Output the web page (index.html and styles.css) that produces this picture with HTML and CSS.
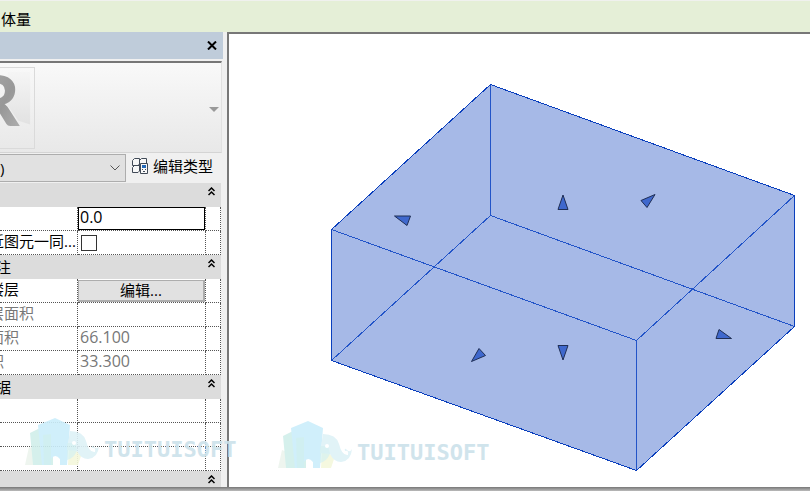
FILE: index.html
```
<!DOCTYPE html>
<html lang="zh-CN">
<head>
<meta charset="utf-8">
<title>体量</title>
<link rel="stylesheet" href="styles.css">
</head>
<body>
<header class="context-bar">体量</header>
<main class="workspace">
  <aside class="palette">
    <div class="palette-title"><button class="close" type="button" aria-label="关闭"><svg width="10" height="9" viewBox="0 0 10 9"><path d="M1 .5 9 8.500M9 .5 1 8.500" stroke="#000" stroke-width="2"/></svg></button></div>
    <div class="preview">
      <svg class="thumb" width="35" height="82" viewBox="0 0 35 82" aria-hidden="true">
        <defs><linearGradient id="metal" x1="0" y1="0" x2="1" y2="1"><stop offset="0" stop-color="#b0b0b0"/><stop offset=".6" stop-color="#989898"/><stop offset="1" stop-color="#b4b4b4"/></linearGradient>
        <linearGradient id="cast" x1="0" y1="0" x2="0" y2="1"><stop offset="0" stop-color="#f5f5f5"/><stop offset="1" stop-color="#e2e2e2"/></linearGradient></defs>
        <path d="M8 4H31V58L19 54 6 36Z" fill="url(#cast)"/>
        <text class="mark" x="20" y="60" text-anchor="end" fill="url(#metal)">R</text>
      </svg>
      <button class="drop" type="button" aria-label="类型选择器"><svg width="10" height="5" viewBox="0 0 10 5"><path d="M0 0H10L5 5Z" fill="#999"/></svg></button>
    </div>
    <div class="type-row">
      <div class="picker">
        <select aria-label="图元"><option>)</option></select>
        <svg width="10" height="6" viewBox="0 0 10 6"><path d="M.5 .5 5 5 9.500 .5" fill="none" stroke="#555"/></svg>
      </div>
      <button class="edit-type" type="button">
        <svg width="17" height="17" viewBox="0 0 17 17" fill="#f8f8f8" stroke="#414a57"><path d="M2.500 .5H7.500V6L6 7.500H.5V2.500ZM9.500 .5H14.500V6L13 7.500H7.500V2.500ZM2.500 7.500H7.500V13L6 14.500H.5V9.500Z"/><path d="M8.500 5.500H15.500V15.500H8.500Z"/><path d="M10 8.500H14" stroke="#2469b8" stroke-width="3"/><path d="M10 11.500H11M13 11.500H14M11 13.500H13"/></svg>
        <span>编辑类型</span>
      </button>
    </div>
    <table class="props">
      <colgroup><col class="c-name"><col class="c-value"><col class="c-link"></colgroup>
      <tbody>
        <tr class="group"><th colspan="3"><button type="button" aria-label="折叠"><svg width="7" height="9" viewBox="0 0 7 9"><path d="M.5 4 3.500 1 6.500 4M.5 8 3.500 5 6.500 8"/></svg></button></th></tr>
        <tr><td></td><td><input class="field" type="text" value="0.0" aria-label="偏移"></td><td></td></tr>
        <tr><td><label class="name" for="together">近图元一同...</label></td><td><input class="tick" id="together" type="checkbox"></td><td></td></tr>
      </tbody>
      <tbody>
        <tr class="group"><th colspan="3"><span class="group-name">标注</span><button type="button" aria-label="折叠"><svg width="7" height="9" viewBox="0 0 7 9"><path d="M.5 4 3.500 1 6.500 4M.5 8 3.500 5 6.500 8"/></svg></button></th></tr>
        <tr><td><span class="name">楼层</span></td><td><button class="edit" type="button">编辑...</button></td><td></td></tr>
        <tr class="readonly"><td><span class="name">层面积</span></td><td></td><td></td></tr>
        <tr class="readonly"><td><span class="name">面积</span></td><td><span class="value">66.100</span></td><td></td></tr>
        <tr class="readonly"><td><span class="name">积</span></td><td><span class="value">33.300</span></td><td></td></tr>
      </tbody>
      <tbody>
        <tr class="group"><th colspan="3"><span class="group-name">数据</span><button type="button" aria-label="折叠"><svg width="7" height="9" viewBox="0 0 7 9"><path d="M.5 4 3.500 1 6.500 4M.5 8 3.500 5 6.500 8"/></svg></button></th></tr>
        <tr><td></td><td></td><td></td></tr>
        <tr><td></td><td></td><td></td></tr>
        <tr><td></td><td></td><td></td></tr>
      </tbody>
      <tbody>
        <tr class="group"><th colspan="3"><button type="button" aria-label="折叠"><svg width="7" height="9" viewBox="0 0 7 9"><path d="M.5 4 3.500 1 6.500 4M.5 8 3.500 5 6.500 8"/></svg></button></th></tr>
      </tbody>
    </table>
  </aside>
  <section class="view" aria-label="三维视图">
    <svg class="scene" viewBox="229 34 581 453" preserveAspectRatio="xMinYMin meet">
      <path fill="#a6b9e7" d="M490.500 84.500 794.500 195.500V326.500L636.500 470.500 331.500 360.500V229.500Z"/>
      <g fill="none" stroke="#2254c8" shape-rendering="crispEdges">
        <path d="M331.500 229.500 636.500 340.500 794.500 195.500M636.500 340.500V470.500M490.500 84.500V215.500M331.500 360.500 490.500 215.500 794.500 326.500"/>
        <path stroke="#0a3fbd" d="M490.500 84.500 794.500 195.500V326.500L636.500 470.500 331.500 360.500V229.500Z"/>
      </g>
      <g fill="#3f68cd" stroke="#1f2e55">
        <path d="M394.500 216H410.500L407 225.500Z"/>
        <path d="M563 195 568 209.500H558Z"/>
        <path d="M655 194.500 647 207.500 641 200.500Z"/>
        <path d="M471.500 361.500 479 348.500 485.500 355.500Z"/>
        <path d="M558 345.500H568L563 360Z"/>
        <path d="M716 338.500 719 329.500 731.500 338.500Z"/>
      </g>
    </svg>
  </section>
</main>
<footer class="edge"></footer>
<svg class="brand brand-a" width="212" height="50" viewBox="0 0 212 50"><g id="brand">
  <path fill="#edf5ee" d="M4 30 14 34V48H0Z"/>
  <path fill="#d1efeb" d="M5 16 17 10H28V48H8Z"/>
  <path fill="#cceefb" d="M13 8 30 1 45 8 42 48H35V42Q30 36 26 42V48H17Z"/>
  <path fill="#c9eee9" opacity=".6" d="M18 18 26 17V48H19Z"/>
  <path fill="#f5f8dc" d="M44 32 57 36 53 48H43Z"/>
  <path fill="#def2f7" d="M45 14Q58 14 61 24Q64 36 70 35Q71 30 67 31Q66 27 69 30Q72 33 74 29Q73 41 63 42Q56 42 52 34L42 33Z"/>
  <path fill="#d0eff0" opacity=".7" d="M42 26H50L52 34Q48 42 42 43Z"/>
  <circle cx="49" cy="26" r="2" fill="#fff"/>
  <text class="brand-name" x="79" y="40">TUITUISOFT</text>
</g></svg>
<svg class="brand brand-b" width="212" height="50" viewBox="0 0 212 50"><use href="#brand"/></svg>
</body>
</html>
```
FILE: styles.css
```
* { box-sizing: border-box; }
html, body { height: 100%; }
body {
  margin: 0;
  position: relative;
  display: flex;
  flex-direction: column;
  overflow: hidden;
  background: #f0f0f0;
  color: #000;
  font: 15px/20px "Open Sans", "Noto Sans CJK SC", sans-serif;
}
button, input, select { font: inherit; color: inherit; border-radius: 0; margin: 0; }
button { border: 0; padding: 0; background: none; display: flex; align-items: center; }
svg { display: block; }

.context-bar {
  flex: none;
  padding: 8px 1px 3px;
  border-top: 1px solid #f0f1ee;
  background: #e5efd7;
}
.workspace { flex: 1; min-height: 0; display: flex; gap: 4px; }
.palette { flex: none; width: 223px; overflow: hidden; }
.palette-title {
  height: 27px;
  display: flex;
  align-items: center;
  justify-content: flex-end;
  padding-right: 6px;
  background: #bfccda;
}
.preview {
  height: 92px;
  margin: 2px 1px 0 0;
  padding: 4px 2px 0 0;
  display: flex;
  align-items: flex-start;
  justify-content: space-between;
  border-top: 2px solid #777;
  border-right: 1px solid #e1e1e1;
  border-bottom: 1px solid #d4d4d4;
  background: linear-gradient(#f9f9f9, #e8e8e8);
}
.thumb { border: 1px solid #dadada; border-left: 0; }
.mark { font: 900 72px Lato, sans-serif; }
.drop { align-self: center; }
.type-row {
  height: 30px;
  margin-right: 2px;
  padding: 1px 0;
  display: flex;
  gap: 6px;
}
.picker {
  flex: none;
  width: 126px;
  display: flex;
  align-items: center;
  padding-right: 5px;
  border: 1px solid #adadad;
  border-left: 0;
  background: #e1e1e1;
}
.picker select {
  flex: 1;
  min-width: 0;
  appearance: none;
  border: 0;
  padding: 0;
  background: none;
}
.edit-type { gap: 4px; padding-bottom: 4px; }

.props {
  width: 221px;
  table-layout: fixed;
  border-collapse: separate;
  border-spacing: 0;
  background: #fff;
}
.c-name { width: 78px; }
.c-value { width: 128px; }
.c-link { width: 15px; }
.props td, .props th { height: 24px; padding: 0; }
.props td {
  border-right: 1px dotted #555;
  border-bottom: 1px dotted #555;
  white-space: nowrap;
  overflow: hidden;
}
.props td:nth-child(2) { padding-left: 2px; }
.props td:has(.field), .props td:has(.edit) { padding: 0; }
.props th { background: #dcdcdc; font-weight: 400; position: relative; text-align: left; }
.props th button { position: absolute; right: 6px; top: 4px; }
.props th path { fill: none; stroke: #000; stroke-width: 1.500; }
.name, .value { display: block; padding-bottom: 3px; }
.name { margin-left: -11px; }
.value, .field { font-size: 16px; }
.group-name { display: block; margin-left: -19px; }
.readonly { color: #777; }
.props .field {
  display: block;
  width: 100%;
  height: 23px;
  padding: 0 1px 3px;
  border: 1px solid #000;
  background: #fff;
}
.tick {
  appearance: none;
  display: block;
  width: 16px;
  height: 16px;
  margin-left: 1px;
  border: 1px solid #333;
  background: #fff;
}
.edit {
  width: 100%;
  height: 22px;
  justify-content: center;
  border: 1px solid #adadad;
  border-width: 1px 2px 2px 1px;
  background: #e1e1e1;
}

.view {
  flex: 1;
  min-width: 0;
  border: solid #777;
  border-width: 2px 0 0 2px;
  background: #fff;
  overflow: hidden;
}
.scene { width: 100%; height: 100%; }
.edge { flex: none; height: 4px; background: linear-gradient(#777, #bbb); }

.brand { position: absolute; pointer-events: none; opacity: .9; }
.brand-a { left: 25px; top: 417px; }
.brand-b { left: 278px; top: 420px; }
.brand-name { font: 700 22px "DejaVu Sans Mono", monospace; fill: #cce2eb; }
```
